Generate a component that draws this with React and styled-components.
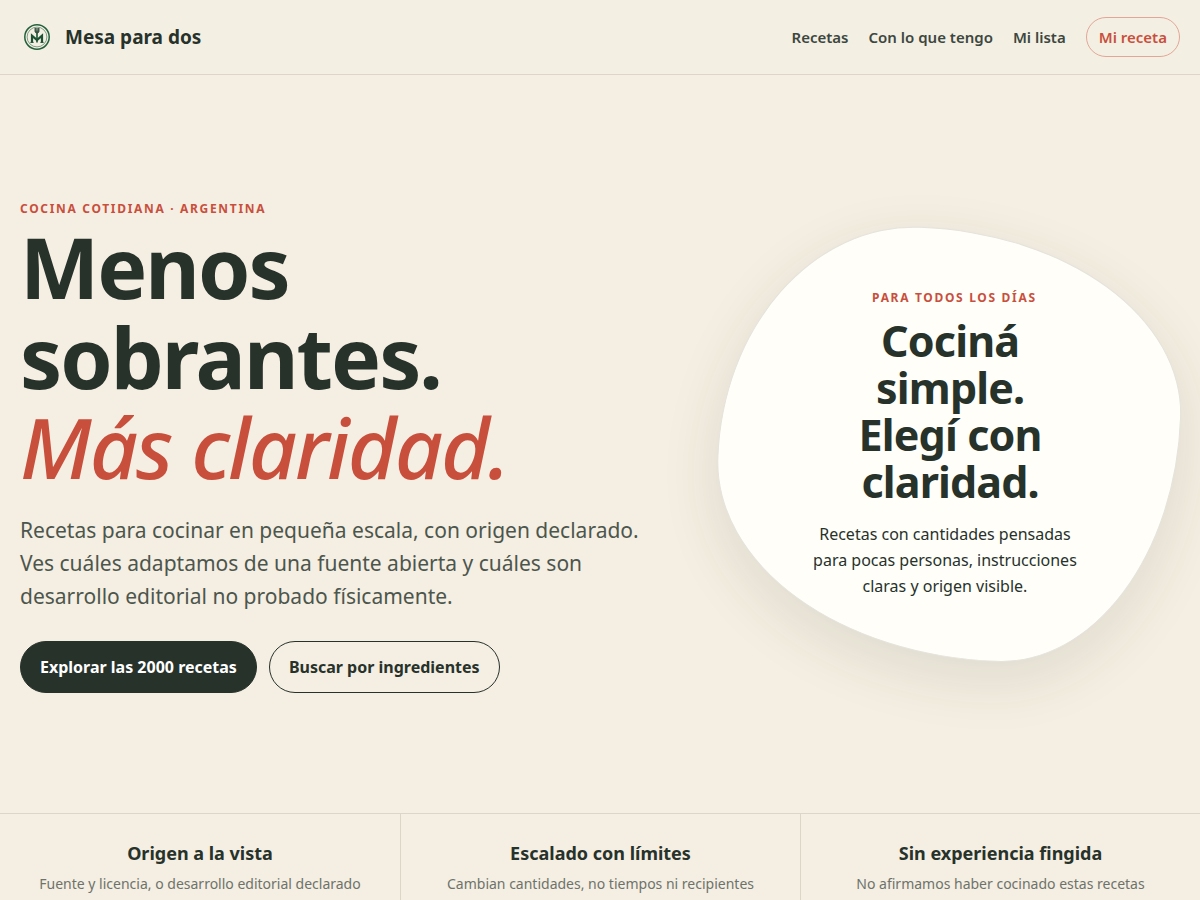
import styled, { createGlobalStyle } from "styled-components";

const facts = [
  {
    title: "Origen a la vista",
    text: "Fuente y licencia, o desarrollo editorial declarado",
  },
  {
    title: "Escalado con límites",
    text: "Cambian cantidades, no tiempos ni recipientes",
  },
  {
    title: "Sin experiencia fingida",
    text: "No afirmamos haber cocinado estas recetas",
  },
];

function Logo() {
  return (
    <svg width="34" height="34" viewBox="0 0 34 34" fill="none" aria-hidden="true">
      <circle cx="17" cy="17" r="12.2" stroke="#24603c" strokeWidth="1.5" />
      <circle cx="17" cy="17" r="9.9" stroke="#5f8a6c" strokeWidth="0.8" />
      <path
        d="M12 22.6V15.6l5 4.4 5-4.4v7"
        stroke="#1b5233"
        strokeWidth="2.2"
      />
      <path d="M10.4 22.4h3.2M20.4 22.4h3.2" stroke="#1b5233" strokeWidth="1" />
      <path d="M17 12v10.4" stroke="#1b5233" strokeWidth="1.6" />
      <path
        d="M15 8v3c0 1.4.8 2 2 2s2-.6 2-2V8"
        fill="#3d5a48"
        stroke="#2c4a38"
        strokeWidth="0.9"
      />
      <path d="M16.3 8v2.6M17.7 8v2.6" stroke="#d5dccb" strokeWidth="0.4" />
    </svg>
  );
}

export default function App() {
  return (
    <>
      <GlobalStyle />
      <Header>
        <Brand href="#inicio">
          <Logo />
          <span>Mesa para dos</span>
        </Brand>
        <Nav aria-label="Principal">
          <NavLink href="#recetas">Recetas</NavLink>
          <NavLink href="#ingredientes">Con lo que tengo</NavLink>
          <NavLink href="#lista">Mi lista</NavLink>
          <NavPill href="#mi-receta">Mi receta</NavPill>
        </Nav>
      </Header>
      <main>
        <Hero>
          <div>
            <Eyebrow>Cocina cotidiana · Argentina</Eyebrow>
            <Title>
              Menos sobrantes. <em>Más claridad.</em>
            </Title>
            <Lead>
              Recetas para cocinar en pequeña escala, con origen declarado. Ves
              cuáles adaptamos de una fuente abierta y cuáles son desarrollo
              editorial no probado físicamente.
            </Lead>
            <Actions>
              <Action href="#recetas" $solid>
                Explorar las 2000 recetas
              </Action>
              <Action href="#ingredientes">Buscar por ingredientes</Action>
            </Actions>
          </div>
          <Plate>
            <Eyebrow>Para todos los días</Eyebrow>
            <PlateTitle>
              Cociná simple.
              <br />
              Elegí con claridad.
            </PlateTitle>
            <PlateText>
              Recetas con cantidades pensadas para pocas personas, instrucciones
              claras y origen visible.
            </PlateText>
          </Plate>
        </Hero>
        <Facts>
          {facts.map((fact) => (
            <Fact key={fact.title}>
              <h2>{fact.title}</h2>
              <p>{fact.text}</p>
            </Fact>
          ))}
        </Facts>
      </main>
    </>
  );
}

const GlobalStyle = createGlobalStyle`
  * {
    box-sizing: border-box;
  }

  body {
    margin: 0;
    background: #f5eee2;
    color: #27322b;
    font-family: "Noto Sans", sans-serif;
    font-size: 16px;
    line-height: 26px;
  }

  h1, h2, p {
    margin: 0;
  }

  a {
    color: inherit;
    text-decoration: none;
  }
`;

const Header = styled.header`
  display: flex;
  align-items: center;
  justify-content: space-between;
  min-height: 75px;
  padding: 0 20px;
  background: #f4efe3;
  border-bottom: 1px solid #dcd5c8;
`;

const Brand = styled.a`
  display: flex;
  align-items: center;
  gap: 11px;
  font-size: 19px;
  font-weight: 700;
`;

const Nav = styled.nav`
  display: flex;
  align-items: center;
  gap: 20px;
`;

const NavLink = styled.a`
  color: #3c473f;
  font-size: 15px;
  font-weight: 600;
`;

const NavPill = styled(NavLink)`
  padding: 6px 12px;
  color: #c94f3d;
  border: 1px solid #e2a698;
  border-radius: 20px;
`;

const Hero = styled.section`
  display: grid;
  grid-template-columns: 1.4fr 1fr;
  align-items: center;
  gap: 52px;
  min-height: 82vh;
  padding: 40px 20px;
`;

const Eyebrow = styled.p`
  color: #c94f3d;
  font-size: 12px;
  font-weight: 700;
  letter-spacing: 0.14em;
  text-transform: uppercase;
`;

const Title = styled.h1`
  max-width: 600px;
  font-size: 84px;
  line-height: 90px;
  letter-spacing: -2px;

  em {
    display: block;
    color: #c94f3d;
    font-weight: 500;
  }
`;

const Lead = styled.p`
  margin-top: 22px;
  color: #4c564d;
  font-size: 21px;
  line-height: 33px;
`;

const Actions = styled.div`
  display: flex;
  flex-wrap: wrap;
  gap: 12px;
  margin-top: 28px;
`;

const Action = styled.a`
  padding: 12px 19px;
  color: ${(props) => (props.$solid ? "#fff" : "#27322b")};
  background: ${(props) => (props.$solid ? "#27322b" : "transparent")};
  border: 1px solid #27322b;
  border-radius: 26px;
  font-weight: 700;
`;

/* the plate is tilted, its contents are turned back so they read level */
const Plate = styled.aside`
  display: flex;
  flex-direction: column;
  align-items: center;
  justify-content: center;
  min-height: 432px;
  padding: 40px 40px 44px;
  background: #fffef9;
  border: 1px solid #e4e3dc;
  border-radius: 42% 58% 38% 62% / 55% 42% 58% 45%;
  box-shadow: 0 18px 60px rgba(50, 66, 44, 0.11);
  text-align: center;
  transform: rotate(2deg);

  > * {
    transform: rotate(-2deg);
  }
`;

const PlateTitle = styled.h2`
  max-width: 230px;
  margin-top: 6px;
  font-size: 43px;
  line-height: 47px;
  letter-spacing: -0.02em;
`;

const PlateText = styled.p`
  max-width: 280px;
  margin-top: 16px;
`;

const Facts = styled.section`
  display: grid;
  grid-template-columns: repeat(3, 1fr);
  border-top: 1px solid #dcd5c8;
  border-bottom: 1px solid #dcd5c8;
`;

const Fact = styled.div`
  padding: 25px 20px;
  text-align: center;

  & + & {
    border-left: 1px solid #dcd5c8;
  }

  h2 {
    font-size: 18px;
    line-height: 28px;
  }

  p {
    margin-top: 5px;
    color: #6d736b;
    font-size: 14px;
    line-height: 24px;
  }
`;
